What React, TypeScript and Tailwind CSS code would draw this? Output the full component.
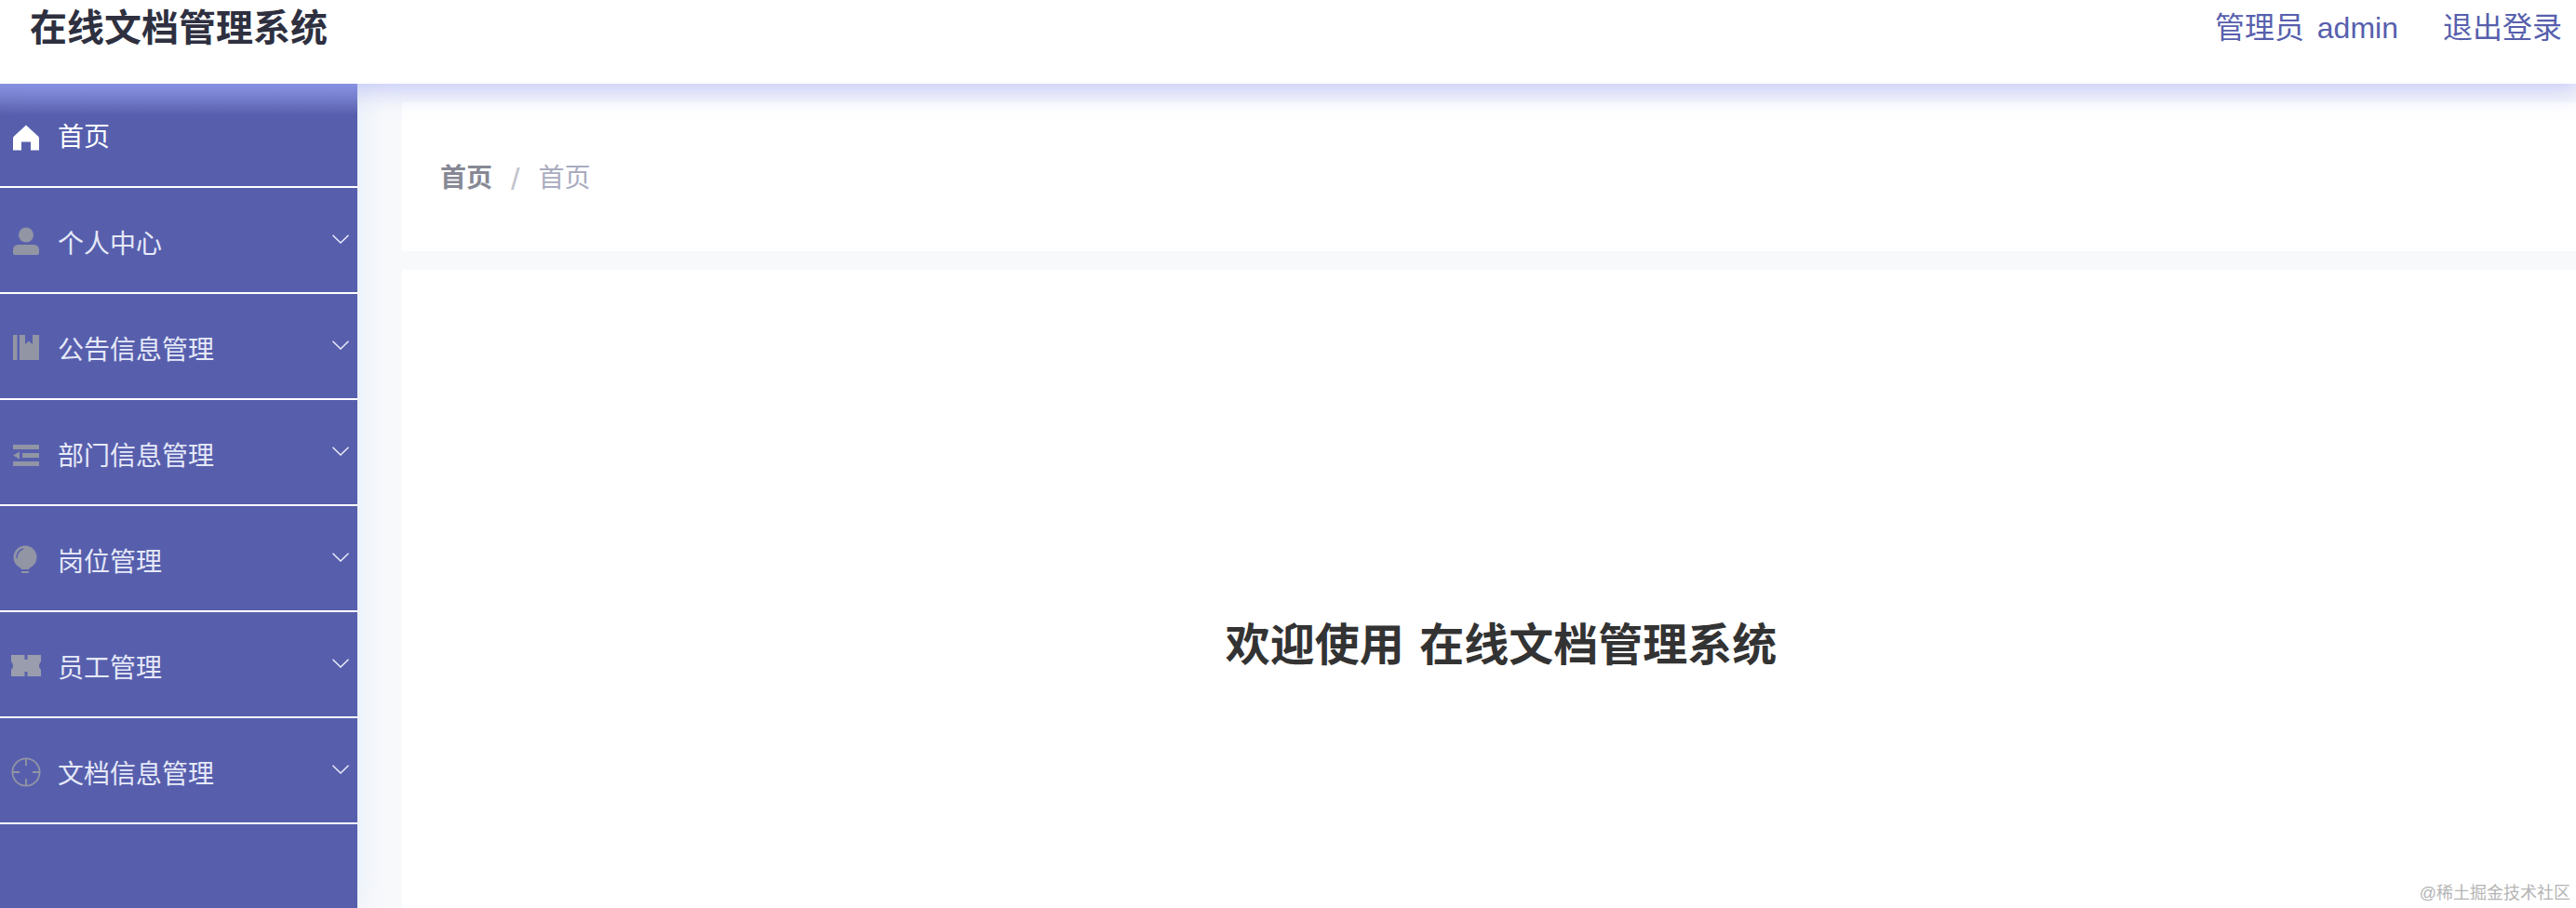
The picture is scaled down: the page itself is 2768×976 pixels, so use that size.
const font = { fontFamily: '"Liberation Sans", "Noto Sans CJK SC", sans-serif' };

const HomeIcon = () => (
  <svg viewBox="0 0 32 32" className="w-8 h-8 mt-[8px]" fill="#ffffff">
    <path d="M16 1.5 L29 13.5 Q30 14.4 30 16 V28.5 H21 V19.5 H11 V28.5 H2 V16 Q2 14.4 3 13.5 Z" />
  </svg>
);
const UserIcon = () => (
  <svg viewBox="0 0 32 32" className="w-8 h-8" fill="#9195a4">
    <circle cx="16" cy="8.5" r="8" />
    <path d="M8 19 H24 Q30 19 30 25 V28 Q30 30 28 30 H4 Q2 30 2 28 V25 Q2 19 8 19 Z" />
  </svg>
);
const BookIcon = () => (
  <svg viewBox="0 0 32 32" className="w-8 h-8" fill="#9195a4">
    <path d="M2 2 H6.5 V29 H2 Z" />
    <path d="M9 2 H15 V12 L19 8.5 L23 12 V2 H30 V29 H9 Z" />
  </svg>
);
const IndentIcon = () => (
  <svg viewBox="0 0 32 32" className="w-8 h-8" fill="#9195a4">
    <rect x="2" y="6" width="28" height="5" />
    <rect x="12" y="15" width="18" height="5" />
    <rect x="2" y="24" width="28" height="5" />
    <path d="M2 17.5 L9 13.5 V21.5 Z" />
  </svg>
);
const BulbIcon = () => (
  <svg viewBox="0 0 32 32" className="w-8 h-8" fill="#9195a4">
    <circle cx="15" cy="13" r="12.5" />
    <path d="M9 22 H21 L19 26 H11 Z" />
    <rect x="11" y="28" width="8" height="2" />
    <path d="M6 14 Q6 6 13 4" fill="none" stroke="#575fad" strokeWidth="1.5" />
  </svg>
);
const TicketIcon = () => (
  <svg viewBox="0 0 32 32" className="w-8 h-8" fill="#9a9dad">
    <path d="M0 4 H14.5 V9 H17.5 V4 H32 V11 Q28 15.5 32 20 V27 H17.5 V22 H14.5 V27 H0 V20 Q4 15.5 0 11 Z" />
    <rect x="14.5" y="12" width="3" height="7" />
  </svg>
);
const TargetIcon = () => (
  <svg viewBox="0 0 32 32" className="w-8 h-8" fill="none" stroke="#9195a4" strokeWidth="1.8">
    <circle cx="16" cy="16" r="14.6" />
    <path d="M16 1 V9 M16 23 V31 M1 16 H9 M23 16 H31" />
  </svg>
);

const Chevron = () => (
  <svg viewBox="0 0 18 10" className="w-[18px] h-[10px] ml-auto mr-[9px] -mt-[6px]" fill="none" stroke="#eef0fb" strokeWidth="1.4">
    <path d="M0.5 0.8 L9 9 L17.5 0.8" />
  </svg>
);

const items = [
  { label: "个人中心", icon: <UserIcon /> },
  { label: "公告信息管理", icon: <BookIcon /> },
  { label: "部门信息管理", icon: <IndentIcon /> },
  { label: "岗位管理", icon: <BulbIcon /> },
  { label: "员工管理", icon: <TicketIcon /> },
  { label: "文档信息管理", icon: <TargetIcon /> },
];

export default function App() {
  return (
    <div className="relative flex flex-col w-full h-screen overflow-hidden bg-[#f8f9fb]" style={font}>
      <header className="relative z-10 flex items-start justify-between h-[90px] shrink-0 bg-white pl-[32px] pr-[15px] shadow-[0_2px_26px_5px_rgba(130,140,240,0.45)]">
        <h1 className="text-[40px] leading-[60px] font-bold text-[#2e3040]">在线文档管理系统</h1>
        <div className="flex gap-[48px] text-[32px] leading-[60px] text-[#575fad]">
          <span className="[word-spacing:5px]">管理员 admin</span>
          <span>退出登录</span>
        </div>
      </header>
      <div className="flex flex-1 min-h-0">
        <aside className="w-[384px] shrink-0 bg-[linear-gradient(180deg,#8a94dc_0,#575fad_34px)] shadow-[0_0_30px_rgba(210,228,250,0.6)]">
          <div className="flex items-center h-[112px] pl-[12px] border-b-2 border-white">
            <HomeIcon />
            <span className="ml-[18px] mt-[6px] text-[28px] text-white">首页</span>
          </div>
          {items.map((item) => (
            <div key={item.label} className="flex items-center h-[114px] pt-[4px] pl-[12px] border-b-2 border-white">
              {item.icon}
              <span className="ml-[18px] mt-[6px] text-[28px] text-[#e6e9f8]">{item.label}</span>
              <Chevron />
            </div>
          ))}
        </aside>
        <main className="flex flex-col flex-1 min-w-0 gap-[20px] pt-[20px] pl-[48px]">
          <div className="flex items-center h-[160px] shrink-0 bg-white pt-[4px] pl-[41px] text-[28px]">
            <span className="font-bold text-[#868894]">首页</span>
            <span className="mx-[20px] text-[34px] text-[#c2c3cc]">/</span>
            <span className="text-[#a9abc0]">首页</span>
          </div>
          <div className="flex-1 bg-white pt-[373px] pl-[26px] text-center">
            <h2 className="text-[48px] leading-[62px] font-bold text-[#333333] [word-spacing:3px]">欢迎使用 在线文档管理系统</h2>
          </div>
        </main>
      </div>
      <span className="absolute right-[6px] bottom-[4px] text-[18px] leading-[24px] text-[#b4b4b4]">@稀土掘金技术社区</span>
    </div>
  );
}
